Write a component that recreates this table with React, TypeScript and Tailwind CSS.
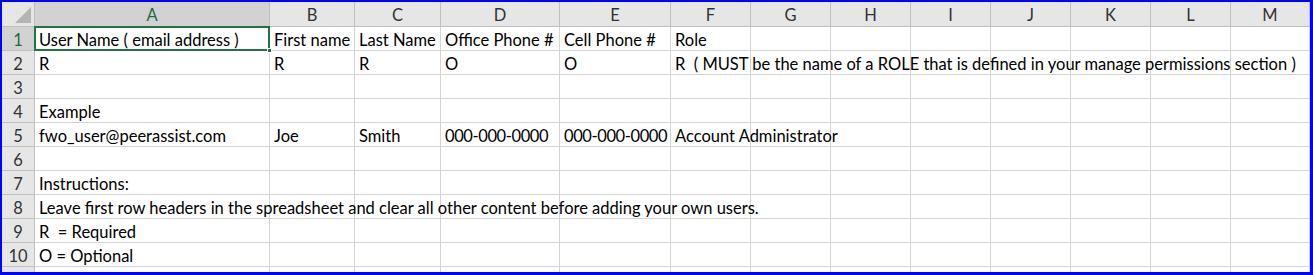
import React from "react";

const COLS = ["A", "B", "C", "D", "E", "F", "G", "H", "I", "J", "K", "L", "M"];

// cell text keyed by row number then column letter
const DATA: Record<number, Record<string, string>> = {
  1: {
    A: "User Name ( email address )",
    B: "First name",
    C: "Last Name",
    D: "Office Phone #",
    E: "Cell Phone #",
    F: "Role",
  },
  2: {
    A: "R",
    B: "R",
    C: "R",
    D: "O",
    E: "O",
    F: "R  ( MUST be the name of a ROLE that is defined in your manage permissions section )",
  },
  4: { A: "Example" },
  5: {
    A: "fwo_user@peerassist.com",
    B: "Joe",
    C: "Smith",
    D: "000-000-0000",
    E: "000-000-0000",
    F: "Account Administrator",
  },
  7: { A: "Instructions:" },
  8: {
    A: "Leave first row headers in the spreadsheet and clear all other content before adding your own users.",
  },
  9: { A: "R  = Required" },
  10: { A: "O = Optional" },
};

const ROWS = [1, 2, 3, 4, 5, 6, 7, 8, 9, 10, 11];

export default function App() {
  return (
    <div
      className="w-[1313px] h-[275px] overflow-hidden bg-white border-t-2 border-l-2 border-r-[3px] border-b-[3px] border-[#0000ff]"
      style={{ fontFamily: "Lato, 'Liberation Sans', sans-serif" }}
    >
      <div className="grid grid-cols-[33px_235px_85px_86px_119px_111px_80px_80px_80px_80px_80px_80px_80px_79px] grid-rows-[25px_repeat(11,24px)] text-[16.5px] leading-[20px] text-black">
        {/* corner */}
        <div className="relative bg-[#e6e6e6] border-r border-b border-[#bfbfbf]">
          <div className="absolute right-[3px] bottom-[3px] w-0 h-0 border-l-[16px] border-l-transparent border-b-[16px] border-b-[#b4b4b4]" />
        </div>

        {/* column letters */}
        {COLS.map((c) => (
          <div
            key={c}
            className={
              c === "A"
                ? "flex items-center justify-center pt-[1px] bg-[#d2d2d2] text-[#1d6a3f] border-r border-b border-[#bfbfbf]"
                : "flex items-center justify-center pt-[1px] bg-[#e6e6e6] text-[#333] border-r border-b border-[#bfbfbf]"
            }
          >
            {c}
          </div>
        ))}

        {ROWS.map((r) => (
          <React.Fragment key={r}>
            <div
              className={
                r === 1
                  ? "flex items-end justify-center bg-[#d2d2d2] text-[#1d6a3f] border-r border-b border-[#bfbfbf]"
                  : "flex items-end justify-center bg-[#e6e6e6] text-[#333] border-r border-b border-[#bfbfbf]"
              }
            >
              {r < 11 ? r : ""}
            </div>
            {COLS.map((c) => {
              const text = DATA[r]?.[c];
              const selected = r === 1 && c === "A";
              const numeric = text !== undefined && /^[0-9-]+$/.test(text);
              return (
                <div
                  key={c}
                  className="relative flex items-end pl-[4px] border-r border-b border-[#d4d4d4] whitespace-pre overflow-visible"
                >
                  {text && (
                    <span className={numeric ? "relative z-10 tracking-[-0.4px]" : "relative z-10"}>
                      {text}
                    </span>
                  )}
                  {selected && (
                    <>
                      <div className="absolute -left-[1px] -top-[1px] -right-[1px] -bottom-[1px] border-2 border-[#217346] z-20 pointer-events-none" />
                      <div className="absolute -right-[3px] -bottom-[3px] w-[5px] h-[5px] bg-[#217346] border border-white z-30" />
                    </>
                  )}
                </div>
              );
            })}
          </React.Fragment>
        ))}
      </div>
    </div>
  );
}
